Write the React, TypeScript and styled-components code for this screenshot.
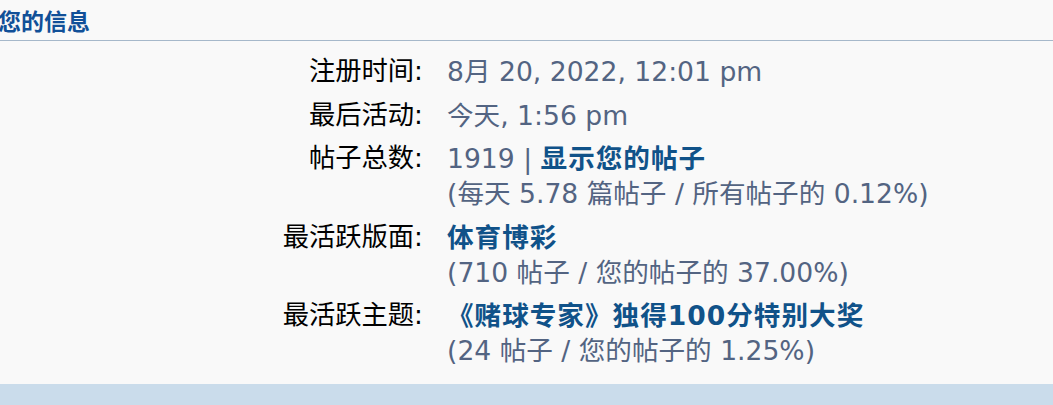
import React from 'react';
import styled, { createGlobalStyle } from 'styled-components';

const GlobalStyle = createGlobalStyle`
  html, body {
    margin: 0;
    padding: 0;
    background: #f9f9f9;
  }
  body {
    font-family: "DejaVu Sans", "Noto Sans CJK SC", sans-serif;
  }
`;

const Page = styled.div`
  width: 1053px;
  height: 405px;
  overflow: hidden;
  background: #f9f9f9;
  display: flex;
  flex-direction: column;
`;

const Title = styled.h3`
  margin: 0 0 0 -2px;
  padding: 7px 0 3px;
  font-size: 23px;
  line-height: 30px;
  font-weight: 700;
  color: #115098;
  border-bottom: 1px solid #a6b8ca;
`;

const Details = styled.dl`
  margin: 0;
  padding: 13px 0 16px;
  display: flex;
  flex-direction: column;
  gap: 8.5px;
  line-height: 35px;
`;

const Row = styled.div`
  display: grid;
  grid-template-columns: 423px 1fr;
  column-gap: 24px;
`;

const Label = styled.dt`
  margin: 0;
  text-align: right;
  color: #000;
  font-size: 26.3px;
  white-space: nowrap;
`;

const Value = styled.dd`
  margin: 0;
  color: #536482;
  font-size: 26.6px;
  white-space: nowrap;
`;

const Line = styled.div``;

const Strong = styled.a`
  color: #105289;
  font-weight: 700;
  letter-spacing: 1px;
  text-decoration: none;
`;

const Band = styled.div`
  flex: 1;
  background: #cadceb;
`;

type Item = { label: string; lines: React.ReactNode[] };

const items: Item[] = [
  { label: '注册时间:', lines: ['8月 20, 2022, 12:01 pm'] },
  { label: '最后活动:', lines: ['今天, 1:56 pm'] },
  {
    label: '帖子总数:',
    lines: [
      <>1919 | <Strong href="#">显示您的帖子</Strong></>,
      '(每天 5.78 篇帖子 / 所有帖子的 0.12%)',
    ],
  },
  {
    label: '最活跃版面:',
    lines: [<Strong href="#">体育博彩</Strong>, '(710 帖子 / 您的帖子的 37.00%)'],
  },
  {
    label: '最活跃主题:',
    lines: [<Strong href="#">《赌球专家》独得100分特别大奖</Strong>, '(24 帖子 / 您的帖子的 1.25%)'],
  },
];

export default function App() {
  return (
    <>
      <GlobalStyle />
      <Page>
        <Title>您的信息</Title>
        <Details>
          {items.map((item) => (
            <Row key={item.label}>
              <Label>{item.label}</Label>
              <Value>
                {item.lines.map((line, i) => (
                  <Line key={i}>{line}</Line>
                ))}
              </Value>
            </Row>
          ))}
        </Details>
        <Band />
      </Page>
    </>
  );
}
